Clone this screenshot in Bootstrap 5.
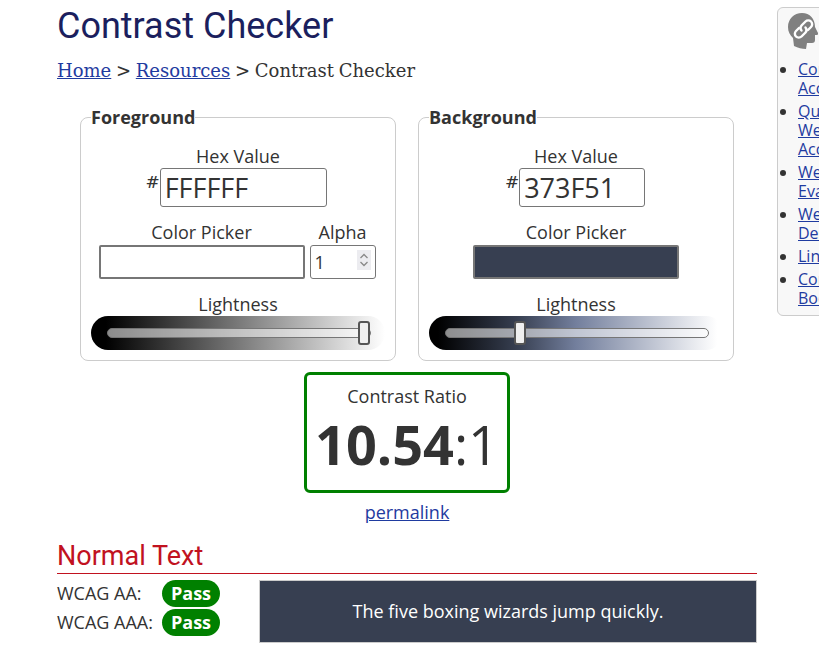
<!DOCTYPE html>
<html lang="en">
<head>
  <meta charset="UTF-8">
  <title>Contrast Checker</title>
  <link href="https://cdn.jsdelivr.net/npm/bootstrap@5.3.3/dist/css/bootstrap.min.css" rel="stylesheet">
  <style>
    html, body { overflow: hidden; height: 655px; }
    body {
      font-family: "Open Sans", sans-serif;
      font-size: 18px;
      color: #333;
      background-color: #fff;
    }
    a { color: #1f3ba0; }

    .page-wrap { width: 1000px; padding-left: 57px; gap: 20px; }
    .main-col { width: 700px; flex: none; }
    .page-title {
      font-family: Roboto, sans-serif;
      font-size: 36px;
      font-weight: 400;
      line-height: 43px;
      color: #1b1f5e;
      margin: 5px 0 0;
    }
    .crumbs {
      font-family: "DejaVu Serif", serif;
      font-size: 18px;
      word-spacing: -1px;
      line-height: 24px;
      margin: 11px 0 0;
    }

    .picker-row { gap: 22px; margin: 34px 0 0 23px; }
    .picker-box {
      width: 316px;
      height: 244px;
      border: 1px solid #ccc;
      border-radius: 8px;
      padding: 0 10px;
      margin: 0;
      min-width: 0;
      text-align: center;
    }
    .picker-box legend {
      float: none;
      width: auto;
      font-size: 18px;
      font-weight: 700;
      line-height: 0;
      height: 1px;
      margin: 0;
      padding: 0;
      text-align: left;
    }
    .field-label { display: block; line-height: 24px; margin: 0; }
    .hex-label { margin-top: 26px; }
    .hex-sign {
      font-family: "DejaVu Serif", serif;
      font-size: 17px;
      line-height: 24px;
      align-self: flex-start;
      margin: 2px 0 0 -2px;
    }
    .hex-row-fg { margin-left: -2px; }
    .hex-input {
      font-size: 27px;
      line-height: 30px;
      height: 39px;
      padding: 2px 4px;
      border: 1px solid #767676;
      border-radius: 3px;
      color: #333;
      background: #fff;
    }
    .hex-wide { width: 167px; }
    .hex-narrow { width: 126px; }
    .pick-row { gap: 5px; margin-top: 13px; }
    .pick-row-fg { margin-left: -2px; }
    .swatch-input {
      display: block;
      appearance: none;
      -webkit-appearance: none;
      width: 206px;
      height: 34px;
      margin-top: 1px;
      padding: 0;
      border: 2px solid #767676;
      border-radius: 2px;
      background: #fff;
    }
    .swatch-input::-webkit-color-swatch-wrapper { padding: 0; }
    .swatch-input::-webkit-color-swatch { border: 0; border-radius: 0; }
    .alpha-input {
      display: block;
      width: 66px;
      height: 34px;
      margin-top: 1px;
      font-size: 18px;
      padding: 1px 4px;
      border: 1px solid #767676;
      border-radius: 3px;
      color: #333;
    }
    .alpha-input::-webkit-inner-spin-button {
      -webkit-appearance: none;
      opacity: 1;
      width: 14px;
      height: 20px;
      background: #ececf0 url("data:image/svg+xml,%3Csvg xmlns='http://www.w3.org/2000/svg' width='14' height='20'%3E%3Cpath d='M3.5 8l3.5-3.5L10.500 8M3.500 12l3.500 3.500 3.500-3.500' fill='none' stroke='%23888' stroke-width='1.3'/%3E%3C/svg%3E") center no-repeat;
    }

    .slider-label { margin-top: 13px; }
    .light-slider {
      display: block;
      appearance: none;
      -webkit-appearance: none;
      width: 294px;
      height: 34px;
      margin: 0;
      padding: 0 14px 0 16px;
      border-radius: 17px;
    }
    .slider-fg { background: linear-gradient(to right, #000 5%, #fff 100%); }
    .slider-bg { background: linear-gradient(to right, #000 3%, #373f51 30%, #737f9d 50%, #fff 98%); }
    .light-slider::-webkit-slider-runnable-track {
      height: 10px;
      border: 1px solid #767676;
      border-radius: 5px;
      background: rgba(255, 255, 255, .55);
    }
    .light-slider::-webkit-slider-thumb {
      -webkit-appearance: none;
      width: 12px;
      height: 24px;
      margin-top: -8px;
      border: 2px solid #555;
      border-radius: 3px;
      background: #efefef;
    }

    .ratio-box {
      width: 206px;
      height: 121px;
      border: 3px solid #008000;
      border-radius: 6px;
      margin: 11px auto 0;
      text-align: center;
    }
    .ratio-label { line-height: 24px; margin-top: 9px; }
    .ratio-value { font-size: 54px; line-height: 66px; margin-top: 3px; }
    .ratio-link { line-height: 24px; margin-top: 7px; }

    .section-head {
      font-family: Roboto, sans-serif;
      font-size: 27px;
      font-weight: 400;
      line-height: 32px;
      color: #c1121f;
      border-bottom: 1px solid #c1121f;
      margin: 16px 0 0;
      padding-bottom: 1px;
    }
    .wcag-area { margin-top: 6px; }
    .wcag-row { line-height: 27px; margin-bottom: 2px; }
    .wcag-label { width: 105px; }
    .pass-pill {
      width: 58px;
      height: 27px;
      border-radius: 14px;
      background: #008000;
      color: #fff;
      font-weight: 700;
      text-align: center;
      line-height: 27px;
    }
    .sample-text {
      width: 498px;
      height: 63px;
      margin-left: 39px;
      background: #373f51;
      color: #fff;
      border: 1px solid #ccc;
      font-size: 18px;
    }

    .side-box {
      width: 220px;
      height: 309px;
      flex: none;
      margin-top: 7px;
      background: #f8f8f8;
      border: 1px solid #ccc;
      border-radius: 6px;
      padding: 5px 10px;
      font-size: 16px;
      line-height: 19px;
    }
    .side-box ul { margin: 11px 0 0; padding-left: 10px; }
    .side-box li { margin-bottom: 4px; white-space: nowrap; }
    .side-box svg { display: block; }
  </style>
</head>
<body>
  <div class="d-flex align-items-start page-wrap">
    <main class="main-col">
      <h1 class="page-title">Contrast Checker</h1>
      <p class="crumbs"><a href="#">Home</a> &gt; <a href="#">Resources</a> &gt; Contrast Checker</p>

      <div class="d-flex picker-row">
        <fieldset class="picker-box">
          <legend>Foreground</legend>
          <label class="field-label hex-label">Hex Value</label>
          <div class="d-flex justify-content-center hex-row-fg">
            <span class="hex-sign">#</span>
            <input class="hex-input hex-wide" type="text" value="FFFFFF">
          </div>
          <div class="d-flex justify-content-center pick-row pick-row-fg">
            <div>
              <label class="field-label">Color Picker</label>
              <input class="swatch-input" type="color" value="#ffffff">
            </div>
            <div>
              <label class="field-label">Alpha</label>
              <input class="alpha-input" type="number" value="1" min="0" max="1" step="0.1">
            </div>
          </div>
          <label class="field-label slider-label">Lightness</label>
          <input class="light-slider slider-fg" type="range" min="0" max="100" value="100">
        </fieldset>

        <fieldset class="picker-box">
          <legend>Background</legend>
          <label class="field-label hex-label">Hex Value</label>
          <div class="d-flex justify-content-center">
            <span class="hex-sign">#</span>
            <input class="hex-input hex-narrow" type="text" value="373F51">
          </div>
          <div class="d-flex justify-content-center pick-row">
            <div>
              <label class="field-label">Color Picker</label>
              <input class="swatch-input" type="color" value="#373f51">
            </div>
          </div>
          <label class="field-label slider-label">Lightness</label>
          <input class="light-slider slider-bg" type="range" min="0" max="100" value="27">
        </fieldset>
      </div>

      <div class="ratio-box">
        <div class="ratio-label">Contrast Ratio</div>
        <div class="ratio-value"><strong>10.54</strong>:1</div>
      </div>
      <div class="ratio-link text-center"><a href="#">permalink</a></div>

      <h2 class="section-head">Normal Text</h2>
      <div class="d-flex wcag-area">
        <div>
          <div class="d-flex wcag-row"><span class="wcag-label">WCAG AA:</span><span class="pass-pill">Pass</span></div>
          <div class="d-flex wcag-row"><span class="wcag-label">WCAG AAA:</span><span class="pass-pill">Pass</span></div>
        </div>
        <div class="sample-text d-flex align-items-center justify-content-center">The five boxing wizards jump quickly.</div>
      </div>
    </main>

    <aside class="side-box">
      <svg width="30" height="36" viewBox="0 0 30 36">
        <path fill="#808080" d="M14 0C6 0 0 6 0 14c0 5 2 8 5 11l1 8c4 2 8 3 12 3l1-6h5c2 0 3-1 3-3v-5h2c1 0 1-1 1-2l-3-6C27 6 22 0 14 0z"/>
        <g fill="none" stroke="#fff" stroke-width="2.400" stroke-linecap="round">
          <path d="M11 15l-3 3a3.800 3.800 0 0 0 5.500 5.500l4-4a3.800 3.800 0 0 0 0-5"/>
          <path d="M13.500 17.500a3.800 3.800 0 0 1 0-5l4-4a3.800 3.800 0 0 1 5.500 5.500l-3 3"/>
        </g>
      </svg>
      <ul>
        <li><a href="#">Contrast and Color<br>Accessibility</a></li>
        <li><a href="#">Quick Reference:<br>Web<br>Accessibility</a></li>
        <li><a href="#">Web Accessibility<br>Evaluation Tool</a></li>
        <li><a href="#">Web Design<br>Designers</a></li>
        <li><a href="#">Link Contrast</a></li>
        <li><a href="#">Contrast Checker<br>Bookmarklet</a></li>
      </ul>
    </aside>
  </div>
</body>
</html>
